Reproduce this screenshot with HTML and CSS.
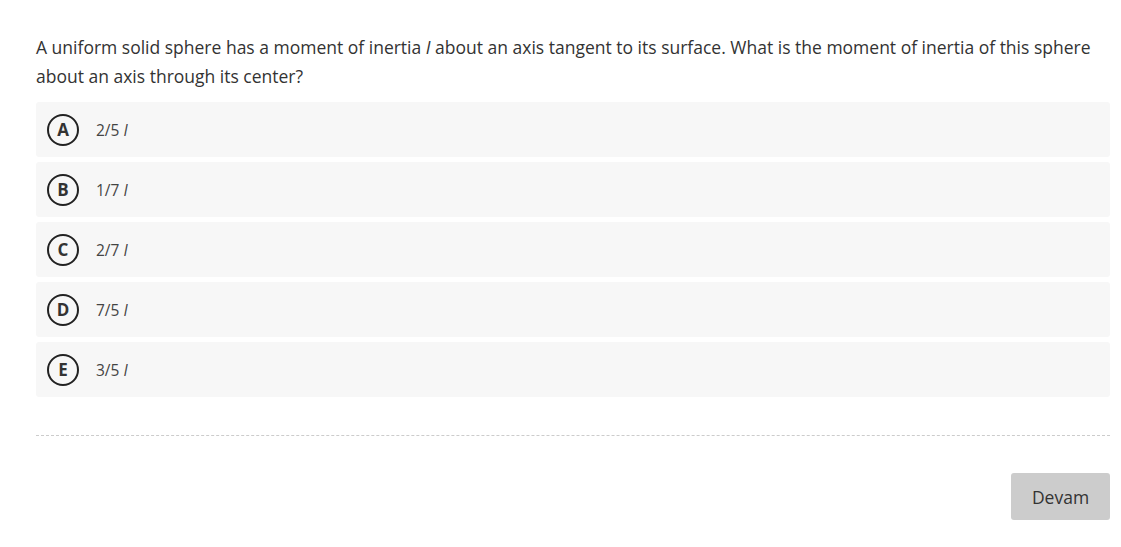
FILE: index.html
```html
<!DOCTYPE html>
<html>
<head>
<meta charset="utf-8">
<link rel="stylesheet" href="styles.css">
</head>
<body>
<div class="quiz">
  <p class="question">A uniform solid sphere has a moment of inertia <i>I</i> about an axis tangent to its surface. What is the moment of inertia of this sphere about an axis through its center?</p>
  <ul class="options">
    <li class="option"><span class="letter">A</span><span class="text">2/5 <i>I</i></span></li>
    <li class="option"><span class="letter">B</span><span class="text">1/7 <i>I</i></span></li>
    <li class="option"><span class="letter">C</span><span class="text">2/7 <i>I</i></span></li>
    <li class="option"><span class="letter">D</span><span class="text">7/5 <i>I</i></span></li>
    <li class="option"><span class="letter">E</span><span class="text">3/5 <i>I</i></span></li>
  </ul>
  <div class="divider"></div>
  <div class="actions"><button class="btn">Devam</button></div>
</div>
</body>
</html>
```
FILE: styles.css
```css
html, body {
  margin: 0;
  padding: 0;
  background: #fff;
}
body {
  font-family: "Open Sans", "Liberation Sans", sans-serif;
  color: #333;
}
.quiz {
  padding: 33px 11px 0 36px;
}
.question {
  margin: 0;
  font-size: 17.5px;
  line-height: 29px;
  color: #333;
}
.options {
  list-style: none;
  margin: 11px 0 0;
  padding: 0;
  display: flex;
  flex-direction: column;
  gap: 5px;
}
.option {
  display: flex;
  align-items: center;
  height: 55px;
  padding-left: 11px;
  background: #f7f7f7;
  border-radius: 3px;
}
.letter {
  box-sizing: border-box;
  width: 32px;
  height: 32px;
  border: 2px solid #222;
  border-radius: 50%;
  display: flex;
  align-items: center;
  justify-content: center;
  font-size: 17px;
  font-weight: 700;
  color: #333;
}
.text {
  margin-left: 17px;
  font-size: 15.5px;
  color: #444;
}
.divider {
  margin-top: 38px;
  border-top: 1px dashed #ccc;
}
.actions {
  display: flex;
  justify-content: flex-end;
  margin-top: 37px;
}
.btn {
  width: 99px;
  height: 47px;
  border: none;
  border-radius: 3px;
  background: #ccc;
  color: #333;
  font-family: "Open Sans", "Liberation Sans", sans-serif;
  font-size: 17.5px;
}
```
